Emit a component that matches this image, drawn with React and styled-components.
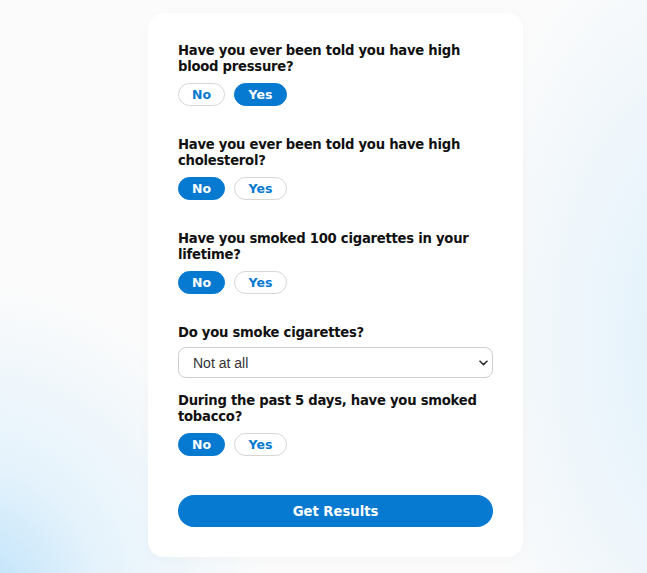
import React, { useState } from "react";
import styled, { createGlobalStyle } from "styled-components";

const Global = createGlobalStyle`
  html, body { margin: 0; padding: 0; }
  body {
    font-family: "DejaVu Sans", sans-serif;
    background: #fbfbfb;
  }
`;

const Page = styled.div`
  min-height: 573px;
  box-sizing: border-box;
  display: flex;
  justify-content: center;
  align-items: flex-start;
  padding: 13px 0 0 24px;
  background:
    radial-gradient(ellipse 300px 330px at -30px 610px, rgba(180, 222, 250, 0.95), rgba(214, 237, 252, 0.6) 45%, rgba(251, 251, 251, 0) 100%),
    radial-gradient(ellipse 240px 440px at 700px 340px, rgba(218, 238, 251, 0.85), rgba(251, 251, 251, 0) 100%),
    #fbfbfb;
`;

const Card = styled.div`
  width: 375px;
  box-sizing: border-box;
  background: #ffffff;
  border-radius: 16px;
  padding: 30px 30px 30px;
  box-shadow: 0 2px 14px rgba(0, 0, 0, 0.025);
`;

const Section = styled.div`
  margin-bottom: ${(p) => p.$gap}px;
`;

const Question = styled.div`
  font-family: "DejaVu Sans", sans-serif;
  font-weight: 700;
  font-size: 13.2px;
  line-height: 16px;
  color: #111111;
  letter-spacing: -0.25px;
  margin-bottom: ${(p) => p.$gap || 8}px;
`;

const Choices = styled.div`
  display: flex;
  gap: 9px;
`;

const Choice = styled.button`
  height: 23px;
  box-sizing: border-box;
  width: ${(p) => p.$w}px;
  border-radius: 12px;
  font-family: "DejaVu Sans", sans-serif;
  font-weight: 700;
  font-size: 12.5px;
  padding: 0;
  cursor: pointer;
  border: 1.5px solid ${(p) => (p.$active ? "#0679d0" : "#d6d6d6")};
  background: ${(p) => (p.$active ? "#0679d0" : "#ffffff")};
  color: ${(p) => (p.$active ? "#ffffff" : "#0679d0")};
`;

const SelectWrap = styled.div`
  position: relative;
`;

const Select = styled.select`
  display: block;
  width: 100%;
  height: 31px;
  box-sizing: border-box;
  border: 1px solid #cfcfcf;
  border-radius: 8px;
  background: #fff;
  padding: 0 24px 0 14px;
  font-family: "Liberation Sans", Arial, sans-serif;
  font-size: 14px;
  color: #333;
  appearance: none;
  -webkit-appearance: none;
`;

const Chevron = styled.svg`
  position: absolute;
  right: 5px;
  top: 13px;
  pointer-events: none;
`;

const Submit = styled.button`
  width: 100%;
  height: 32px;
  border: none;
  border-radius: 16px;
  background: #0679d0;
  color: #fff;
  font-family: "DejaVu Sans", sans-serif;
  font-weight: 700;
  font-size: 13.2px;
  cursor: pointer;
`;

function YesNo({ value, onChange }) {
  return (
    <Choices>
      <Choice $w={47} $active={value === "no"} onClick={() => onChange("no")}>
        No
      </Choice>
      <Choice $w={53} $active={value === "yes"} onClick={() => onChange("yes")}>
        Yes
      </Choice>
    </Choices>
  );
}

export default function App() {
  const [a, setA] = useState({ bp: "yes", chol: "no", cig100: "no", past5: "no" });
  const set = (k) => (v) => setA((s) => ({ ...s, [k]: v }));
  return (
    <>
      <Global />
      <Page>
        <Card>
          <Section $gap={31}>
            <Question>Have you ever been told you have high blood pressure?</Question>
            <YesNo value={a.bp} onChange={set("bp")} />
          </Section>
          <Section $gap={31}>
            <Question>Have you ever been told you have high cholesterol?</Question>
            <YesNo value={a.chol} onChange={set("chol")} />
          </Section>
          <Section $gap={31}>
            <Question>Have you smoked 100 cigarettes in your lifetime?</Question>
            <YesNo value={a.cig100} onChange={set("cig100")} />
          </Section>
          <Section $gap={15}>
            <Question $gap={6}>Do you smoke cigarettes?</Question>
            <SelectWrap>
              <Select defaultValue="none">
                <option value="none">Not at all</option>
                <option value="some">Some days</option>
                <option value="every">Every day</option>
              </Select>
              <Chevron width="9" height="6" viewBox="0 0 9 6">
                <path d="M1 1.2 L4.5 4.6 L8 1.2" fill="none" stroke="#333" strokeWidth="1.6" strokeLinecap="round" strokeLinejoin="round" />
              </Chevron>
            </SelectWrap>
          </Section>
          <Section $gap={39}>
            <Question>During the past 5 days, have you smoked tobacco?</Question>
            <YesNo value={a.past5} onChange={set("past5")} />
          </Section>
          <Submit>Get Results</Submit>
        </Card>
      </Page>
    </>
  );
}
